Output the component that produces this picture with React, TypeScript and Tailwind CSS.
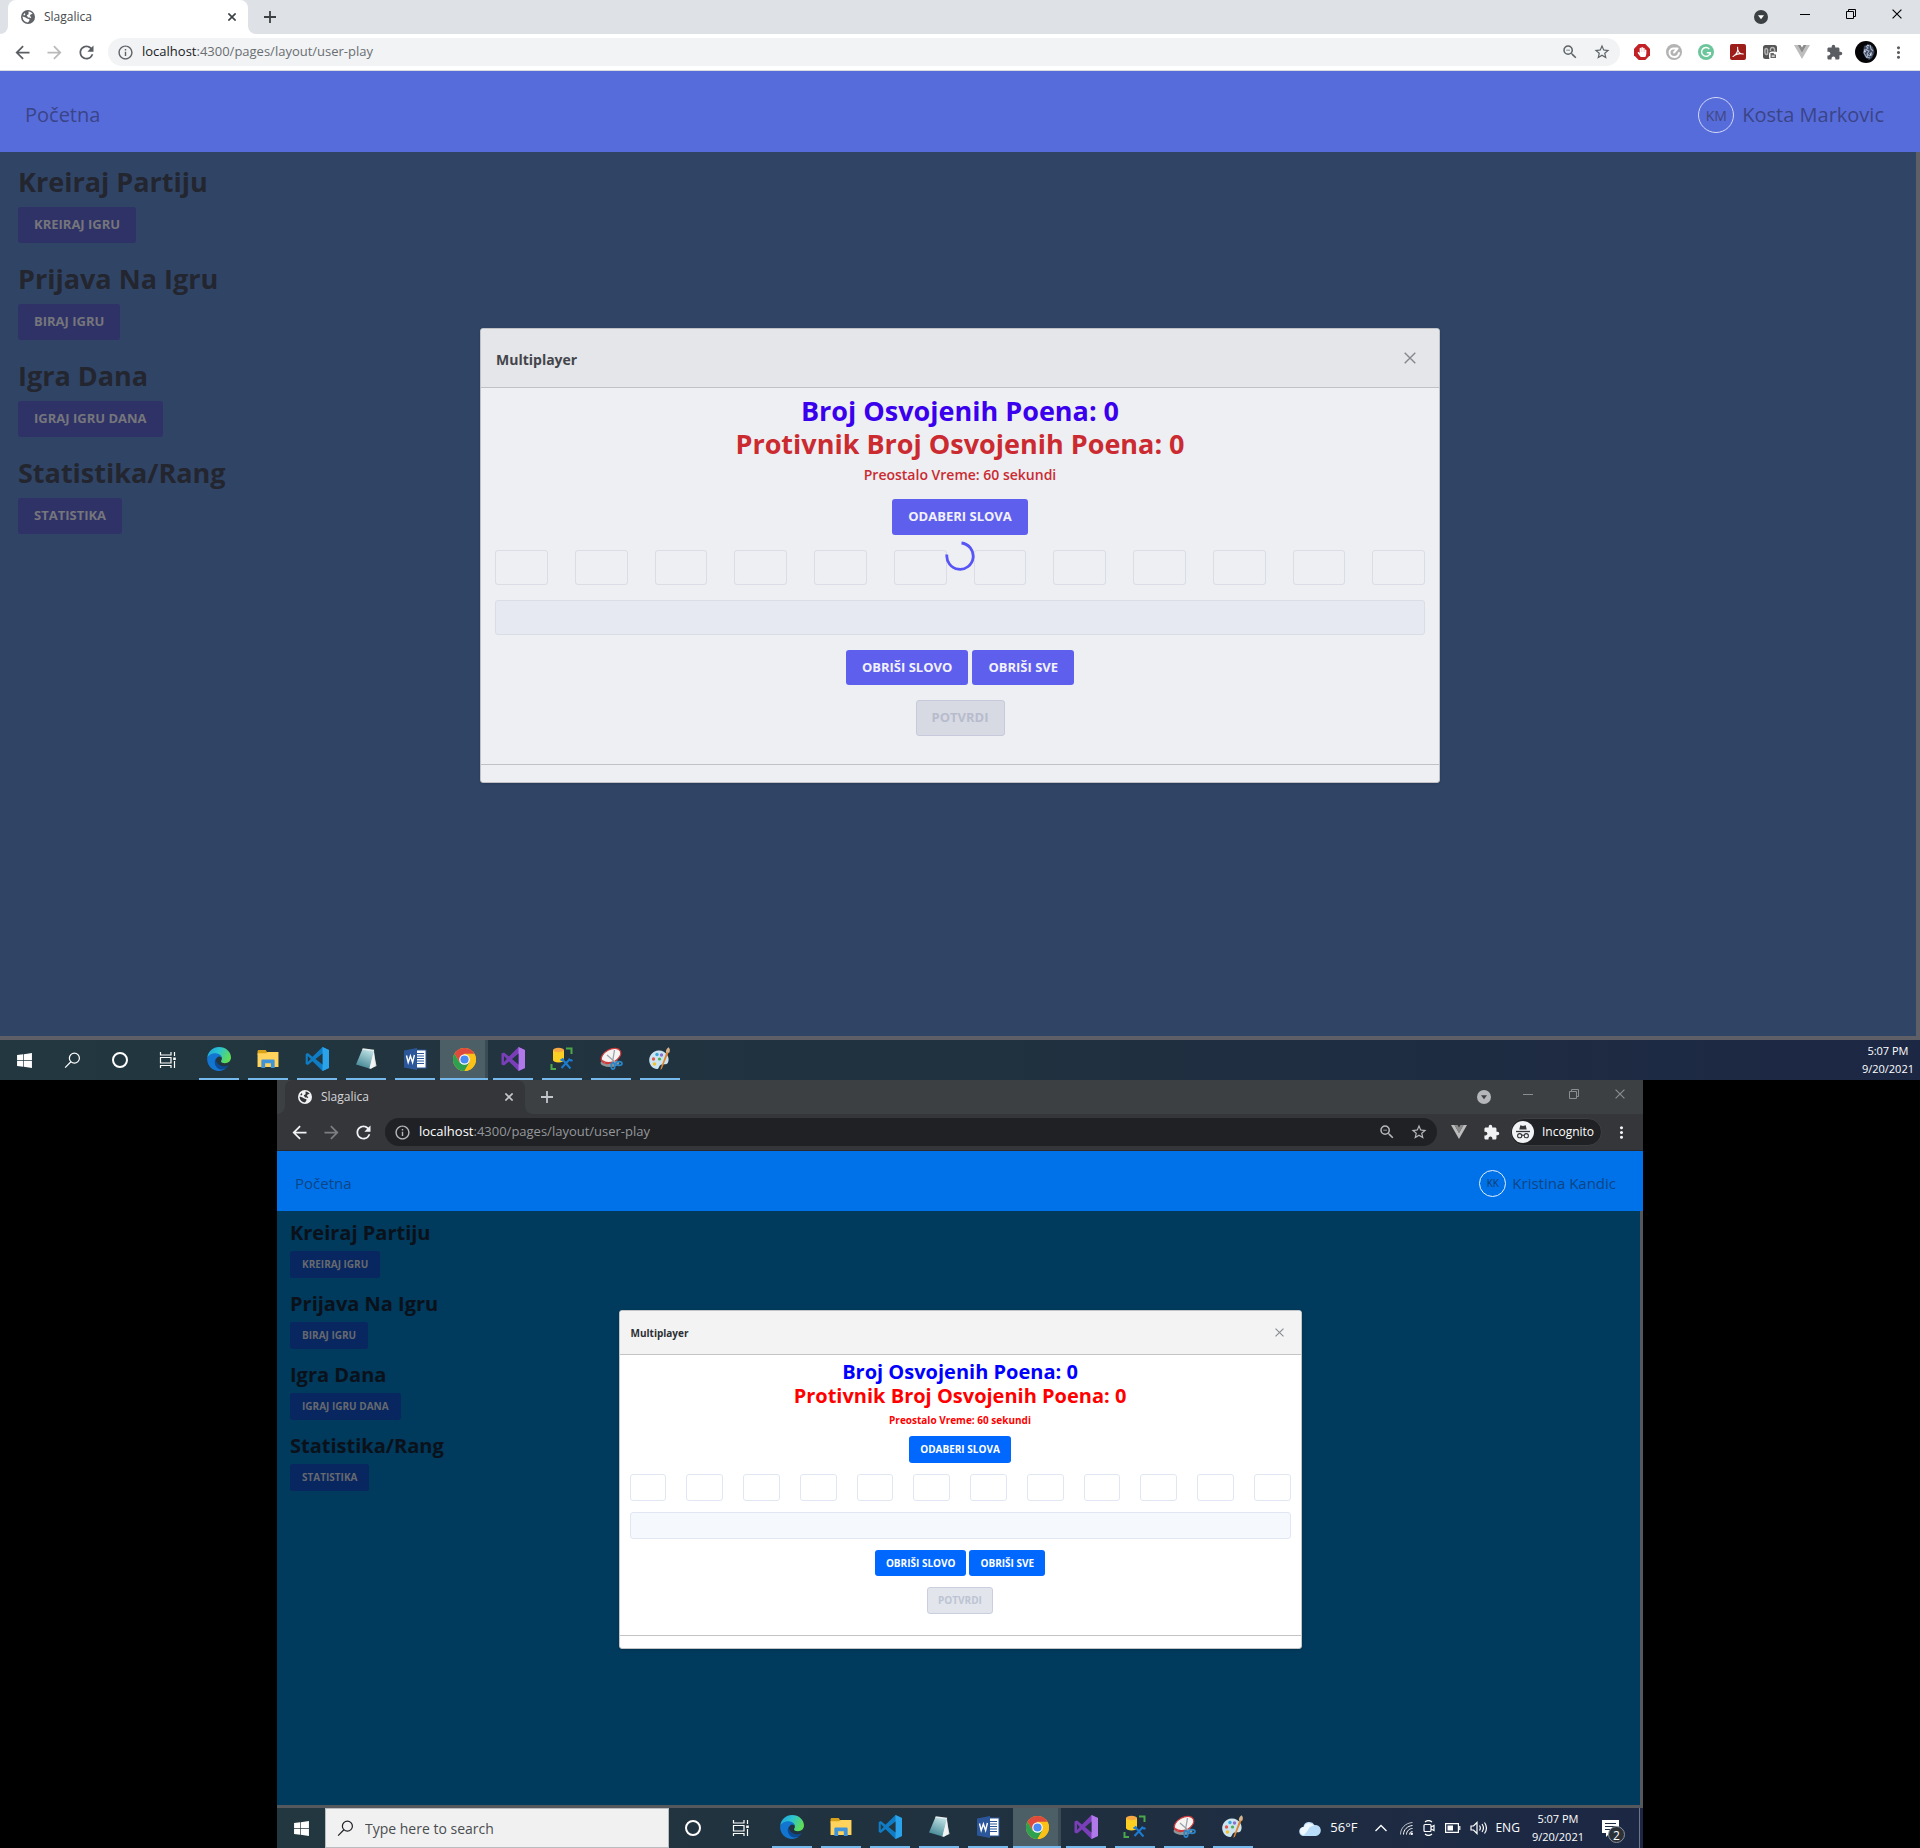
import { createContext, useContext, useId } from "react";
import type { ReactNode } from "react";
import { clsx } from "clsx";
import {
  MdArrowBack,
  MdArrowForward,
  MdExtension,
  MdInfoOutline,
  MdMoreVert,
  MdRefresh,
  MdStarBorder,
  MdZoomOut,
} from "react-icons/md";
import { FaHandPaper, FaWindows } from "react-icons/fa";

/* ---------- Themes ---------- */

const host = {
  strip: "bg-[#dee1e6]",
  toolbar: "bg-white border-[#dadce0]",
  tab: "bg-white",
  tabText: "text-[#45494d]",
  favicon: "text-[#5f6368]",
  tabClose: "text-[#3c4043]",
  tabMenu: "text-[#3c4043]",
  tabMenuMark: "#ffffff",
  winControl: "text-black",
  nav: "text-[#5a5e63]",
  navOff: "text-[#bababa]",
  omnibox: "bg-[#f1f3f4]",
  omniIcon: "text-[#5f6368]",
  urlHost: "text-[#202124]",
  urlPath: "text-[#6a6e73]",

  header: "h-[81px] pt-[7px] pr-9 pl-[25px] bg-[#576cdb] text-[#3a4487] text-[20px]",
  avatar: "size-9 text-[14px] text-[#41477c] border-[#d3d8f6]",
  userGap: "gap-2",
  body: "px-[18px] pt-[14px] border-r-4 border-b-4 border-[#5f6067] bg-[#304466]",
  section: "mb-5",
  sectionTitle: "mb-[9px] text-[27px] leading-[32px] text-[#23262f]",
  sideButton: "h-9 px-4 text-[13px] bg-[#2f3267] text-[#75767c]",

  dialog: "border-[#bfc1c5] bg-[#edeff3]",
  dialogHead: "h-[59px] pt-[2px] px-[15px] border-[#bfc1c5] bg-[#e4e6e9]",
  dialogTitle: "text-[14px] text-[#43454b]",
  dialogClose: "size-7 text-[#85878d]",
  cross: "size-3",
  dialogBody: "px-[14px] pt-[6px] pb-7",
  score: "text-[27px] leading-[33px]",
  own: "text-[#3a00ee]",
  rival: "text-[#cb2b30]",
  time: "mt-[3px] text-[14px] leading-6 font-semibold",
  rowGap: "mt-[15px]",
  pickGap: "mt-3",
  letters: "gap-[27px]",
  field: "h-[35px] border-[#dadce6] bg-[#edeff3]",
  word: "h-[35px] border-[#dadce6] bg-[#e6e9f2]",
  primary: "px-4 text-[13px] bg-[#5f5fee] text-[#f2f2fc]",
  pickHeight: "h-9",
  pairHeight: "h-[35px]",
  disabled: "h-9 px-[15px] text-[13px] border-[#c6cada] bg-[#d7dae3] text-[#b7bccd]",
  pairGap: "gap-1",
  dialogFoot: "h-[18px] border-[#bfc1c5]",
};

type Theme = typeof host;

const guest: Theme = {
  strip: "bg-[#3c4043]",
  toolbar: "bg-[#35363a] border-[#292a2d]",
  tab: "bg-[#35363a]",
  tabText: "text-[#d5d7da]",
  favicon: "text-[#f1f3f4]",
  tabClose: "text-[#c3c6ca]",
  tabMenu: "text-[#b4b6b9]",
  tabMenuMark: "#3c4043",
  winControl: "text-[#8b8e91]",
  nav: "text-[#f1f3f4]",
  navOff: "text-[#7d7e82]",
  omnibox: "bg-[#202124]",
  omniIcon: "text-[#b5b8bc]",
  urlHost: "text-white",
  urlPath: "text-[#94989c]",

  header: "h-[60px] pt-[5px] pr-[27px] pl-[18px] bg-[#0072e9] text-[#0c4586] text-[15px]",
  avatar: "size-[27px] text-[10px] text-[#123c6b] border-[#e6f1fd]",
  userGap: "gap-1.5",
  body: "px-[13px] pt-[10px] border-r-3 border-b-3 border-[#55585c] bg-[#003a5c]",
  section: "mb-[14px]",
  sectionTitle: "mb-1.5 text-[20px] leading-6 text-[#0b111a]",
  sideButton: "h-[27px] px-3 text-[10px] bg-[#08265f] text-[#666a70]",

  dialog: "border-[#c2c4c6] bg-white",
  dialogHead: "h-[44px] pt-px px-[11px] border-[#c2c4c6] bg-[#f3f3f3]",
  dialogTitle: "text-[10px] text-[#2b2f33]",
  dialogClose: "size-5 text-[#85898c]",
  cross: "size-[9px]",
  dialogBody: "px-[10px] pt-[5px] pb-[21px]",
  score: "text-[20px] leading-6",
  own: "text-[#0000ff]",
  rival: "text-[#ff0000]",
  time: "mt-1 text-[10px] leading-4 font-bold",
  rowGap: "mt-[11px]",
  pickGap: "mt-2",
  letters: "gap-5",
  field: "h-[27px] border-[#e1e7f2] bg-white",
  word: "h-[27px] border-[#e1e7f2] bg-[#f5f8fc]",
  primary: "px-[11px] text-[10px] bg-[#0068ff] text-white",
  pickHeight: "h-[27px]",
  pairHeight: "h-[26px]",
  disabled: "h-[27px] px-[10px] text-[10px] border-[#c9cfdd] bg-[#e2e5ec] text-[#bcc4d3]",
  pairGap: "gap-[3px]",
  dialogFoot: "h-[13px] border-[#c2c4c6]",
};

const ThemeContext = createContext<Theme>(host);

/* ---------- Small drawings ---------- */

const Cross = ({ className }: { className: string }) => (
  <svg viewBox="0 0 12 12" className={className} fill="none" stroke="currentColor">
    <path d="M.7.7l10.6 10.6M11.3.7L.7 11.3" strokeWidth="1.400" />
  </svg>
);

const Favicon = () => (
  <svg viewBox="0 0 14 14" className="size-[14px]">
    <circle cx="7" cy="7" r="7" fill="currentColor" />
    <path
      d="M7.500 1.600C9.300 1.700 10.800 2.700 11.700 4.100L9.900 4.300 8.700 5.900 10.300 7 9.600 8.300 8.800 7.600 7 7.600 6.600 6.500 5.700 5.900 6.100 4.900 7.600 4.200Z"
      fill="var(--cut)"
    />
    <path
      d="M1.700 6.500L4.500 7.400 6.100 8.500 8.500 9.300 8.300 10.800 6.900 12.400C4.200 12.300 1.900 10.200 1.600 7.500ZM3.600 3L4.500 4.300 3.300 5.400 2.200 5Z"
      fill="var(--cut)"
    />
  </svg>
);

const VueMark = () => (
  <svg viewBox="0 0 16 14" className="h-[14px] w-4">
    <path d="M0 0h3.500L8 8l4.500-8H16L8 14Z" fill="#bdbdbd" />
    <path d="M3.500 0h3L8 2.600 9.500 0h3L8 8Z" fill="#8b8b8b" />
  </svg>
);

const AdBlock = () => (
  <span className="relative grid size-4 place-items-center">
    <svg viewBox="0 0 16 16" className="absolute inset-0">
      <path d="M4.700 0h6.600L16 4.700v6.600L11.300 16H4.700L0 11.300V4.700Z" fill="#c22126" />
    </svg>
    <FaHandPaper className="relative size-[10px] text-white" />
  </span>
);

const Clipper = () => (
  <svg viewBox="0 0 16 16" className="size-4">
    <circle cx="8" cy="8" r="8" fill="#b3b3b3" />
    <path
      d="M13 9C12.500 11.500 10.500 13 8.300 13 5.300 13 3.300 10.800 3.500 8.200 3.700 6 5.500 4.300 7.800 4.500L11.500 4.500 8 8.500"
      fill="none"
      stroke="#fff"
      strokeWidth="2"
      strokeLinecap="round"
      strokeLinejoin="round"
    />
  </svg>
);

const Grammar = () => (
  <svg viewBox="0 0 16 16" className="size-4">
    <circle cx="8" cy="8" r="8" fill="#6cc69b" />
    <path d="M11.300 5A4.400 4.400 0 1 0 12.300 8.800H8.800M12.300 8.800V11" fill="none" stroke="#fff" strokeWidth="1.400" />
  </svg>
);

const Pdf = () => (
  <svg viewBox="0 0 16 16" className="size-4">
    <rect width="16" height="16" rx="2" fill="#9c1d1a" />
    <path
      d="M3 12.500C6 11 8.300 7.500 7.600 3.200M7.800 5.500C8.500 8.500 10.500 10.200 13.300 10M4.500 11.300C7 9.800 10 9.200 13 10"
      fill="none"
      stroke="#fff"
      strokeWidth="1.100"
      strokeLinecap="round"
    />
  </svg>
);

const Mask = () => (
  <svg viewBox="0 0 16 16" className="size-4">
    <rect x="1" y="1" width="14" height="14" rx="2.500" fill="#555" />
    <path
      d="M3.200 5c1.500-1 2.600-.2 2.400 2S6 11 4.300 10.500 2.600 8 3.200 5ZM8.500 7c-.5-2.500.5-3.500 2-3.500S13 5 12.500 7"
      fill="none"
      stroke="#b5b5b5"
      strokeWidth="1.500"
    />
    <rect x="7" y="7.500" width="9" height="8.500" rx="3" fill="#fff" />
    <path d="M8.500 9h3l1 1.500h1.500V14H8.500Z" fill="#666" />
    <path d="M9.700 11.500h3v1.200h-3Z" fill="#fff" />
  </svg>
);

const ProfilePhoto = () => (
  <svg viewBox="0 0 22 22" className="size-[22px]">
    <circle cx="11" cy="11" r="11" fill="#050507" />
    <path d="M9 5l5-2 4 3 1.500 5-2.500 6-3 2-4-3-2-5Z" fill="#3c4960" />
    <path
      d="M11 5l2 2-2 2 3 1-2 3 3 2M15 4l1 4 2 2M10 8l-1 4 3 5M13 13l-1 3 3 1M16 11l1 3"
      fill="none"
      stroke="#a3b1c6"
      strokeWidth="1.100"
    />
    <path d="M9 10l2 1M15 12l1 3M12 4l2 1" stroke="#e6ebf2" />
  </svg>
);

const IncognitoFace = () => (
  <svg viewBox="0 0 22 22" className="size-[22px]">
    <circle cx="11" cy="11" r="11" fill="#f1f3f4" />
    <path d="M7.300 8.500L8.300 4.300l2.700.7 2.700-.7 1 4.200Z" fill="#35363a" />
    <path d="M4 10.500h14" stroke="#35363a" strokeWidth="1.300" />
    <g fill="none" stroke="#35363a" strokeWidth="1.100">
      <circle cx="7.700" cy="14.700" r="2.100" />
      <circle cx="14.300" cy="14.700" r="2.100" />
      <path d="M9.800 14.500c.8-.6 1.600-.6 2.400 0" />
    </g>
  </svg>
);

const SearchGlass = ({ className }: { className: string }) => (
  <svg viewBox="0 0 18 18" className={className} fill="none" stroke="currentColor" strokeWidth="1.300">
    <circle cx="11" cy="6.500" r="5.300" />
    <path d="M7.300 10.300L1.200 16.500" />
  </svg>
);

const TaskView = () => (
  <svg viewBox="0 0 18 16" className="h-4 w-[18px]" fill="none" stroke="#fff" strokeWidth="1.200">
    <path d="M1.500 0v3h10.500V0M1.500 16v-2.500h10.500V16M1.500 5.500h10.500v5.500H1.500ZM15.500 0v4M15.500 9v7" />
    <path d="M14.200 5.500h2.600v2.500h-2.600Z" fill="#fff" stroke="none" />
  </svg>
);

const Edge = () => {
  const id = useId();
  return (
    <svg viewBox="0 0 24 24" className="size-6">
      <defs>
        <linearGradient id={id} x1="0" y1="0" x2="1" y2=".4">
          <stop offset="0" stopColor="#1f9fdc" />
          <stop offset=".5" stopColor="#2bc3d2" />
          <stop offset="1" stopColor="#5edc5a" />
        </linearGradient>
      </defs>
      <path
        d="M.3 10.500C1 4.500 6 0 12 0c7 0 12 5 12 10.500 0 3.500-2.800 5.700-6 5.700-2.500 0-4-1-4-2 0-.7.900-1 .9-2.700C14.900 9 12.300 7.500 9.500 7.500c-4 0-8 1.500-9.200 3Z"
        fill={`url(#${id})`}
      />
      <path
        d="M.2 11C1.300 8 5 6.200 8.800 6.300 12 6.400 14.800 8.700 14.900 11.500 14.500 10 12.800 9.200 11.200 9.800 8.500 11 8 14 9.500 17.300c1.700 3.500 5.500 5.200 9.500 4C17 23 14.500 24 12 24 5 24-.5 18 .2 11Z"
        fill="#1276d0"
      />
      <path
        d="M8.800 11.500C7 14 7.500 18.500 10.500 21c3 2.500 7.500 2 10-1.200 1.300-1.500 1.800-2 .9-1.500-3 1.700-7.500 1.200-10-1-1.800-1.700-2.900-3.500-2.600-5.800Z"
        fill="#0c4a94"
      />
    </svg>
  );
};

const Explorer = () => (
  <svg viewBox="0 0 22 20" className="h-[19px] w-[22px]">
    <path d="M0 1.500C0 .7.500 0 1.300 0h7.200L10 2v3H0Z" fill="#d9a21b" />
    <path d="M0 3.500h9L10.500 2H22v16H0Z" fill="#ffd35c" />
    <path d="M4 19v-7.500C4 10.500 4.500 10 5.500 10h11c1 0 1.500.5 1.500 1.500V19h-4v-5H8v5Z" fill="#3f93d8" />
  </svg>
);

const Code = () => (
  <svg viewBox="0 0 24 24" className="size-6">
    <path d="M17.500 0L24 3v18l-6.500 3L7.500 14.300 2.800 18 .7 17V7l2.100-1 4.700 3.700Z" fill="#0f7cc4" />
    <path d="M17.500 0L24 3v18l-6.500 3Z" fill="#2ba3ea" />
    <path d="M17.500 6.500v11L10.500 12ZM2.800 9v6L5.800 12Z" fill="#22373f" />
  </svg>
);

const Notepad = () => {
  const id = useId();
  return (
    <svg viewBox="0 0 24 24" className="size-6">
      <defs>
        <linearGradient id={id} x1=".7" y1="0" x2=".3" y2="1">
          <stop offset="0" stopColor="#c3e3e7" />
          <stop offset="1" stopColor="#3f8592" />
        </linearGradient>
      </defs>
      <path d="M19.500 3.500L22.500 19 17 21.500 14 21Z" fill="#d9dfdf" />
      <path d="M8.500 2l11.500 1.500L15.500 21.500 2 17.500Z" fill={`url(#${id})`} />
      <path d="M20 3.500L15.500 21.500l1.500.3 4-3Z" fill="#f3f5f5" />
      <path d="M8.700 1.300l11.500 1.400-.3 1.500L8.300 2.800Z" fill="#e8eeee" />
    </svg>
  );
};

const Word = () => (
  <svg viewBox="0 0 24 24" className="size-6">
    <rect x="11" y="3" width="12" height="18" fill="#fff" stroke="#2b579a" />
    <path d="M14 6.500h7M14 9h7M14 11.500h7M14 14h7M14 16.500h7" stroke="#2b579a" strokeWidth="1.200" />
    <path d="M1 3.500L14 1v22L1 20.500Z" fill="#2b579a" />
    <path d="M3.500 8.500l1.700 7 2.200-6.500 2.200 6.500 1.800-7.500" fill="none" stroke="#fff" strokeWidth="1.400" />
  </svg>
);

const Chrome = () => (
  <svg viewBox="0 0 24 24" className="size-[23px]">
    <circle cx="12" cy="12" r="12" fill="#fbc116" />
    <path d="M12 6h10.400A12 12 0 0 0 1.600 6l5.200 9Z" fill="#de4a3c" />
    <path d="M1.600 6A12 12 0 0 0 12 24l5.200-9H6.800Z" fill="#2da14f" />
    <path d="M12 6.500h10.600A12 12 0 0 1 12 24l5-9Z" fill="#fbc116" />
    <circle cx="12" cy="12" r="5.500" fill="#fff" />
    <circle cx="12" cy="12" r="4.300" fill="#4a8af4" />
  </svg>
);

const VisualStudio = () => (
  <svg viewBox="0 0 24 24" className="size-6">
    <path d="M17.500 0L24 3v18l-6.500 3L8 14.500 3 18.500.5 17.500v-11L3 5.500l5 4Z" fill="#7a3fb8" />
    <path d="M17.500 0L24 3v18l-6.500 3Z" fill="#b078e8" />
    <path d="M17.500 6.500v11L11 12ZM3 9v6L5.800 12Z" fill="#203340" />
  </svg>
);

const Database = () => (
  <svg viewBox="0 0 24 24" className="size-6">
    <path d="M3 3v10c0 1.600 2.500 2.500 5.500 2.500S14 14.600 14 13V3Z" fill="#fbd022" />
    <ellipse cx="8.500" cy="3" rx="5.500" ry="2.200" fill="#f6a843" />
    <path d="M16 1.500h5.500V7M6 22H1.500v-5" fill="none" stroke="#4aa84a" strokeWidth="2" />
    <path
      d="M12 12l8.500 9.500M19.500 12.500l-8 8.500M10.500 13.500l3-2M19 11.500c.5 2 2 2.300 3.500 1.500"
      fill="none"
      stroke="#1d7bd0"
      strokeWidth="2"
    />
  </svg>
);

const Snip = () => (
  <svg viewBox="0 0 24 24" className="size-6">
    <ellipse cx="11" cy="16" rx="9.500" ry="4" fill="#8f9698" />
    <ellipse cx="12" cy="9" rx="10.500" ry="6.500" transform="rotate(-28 12 9)" fill="#f6f3f3" stroke="#cf3b3b" strokeWidth="1.200" />
    <path d="M3 13.500c4 3 9 2.500 12 .5" fill="none" stroke="#cf3b3b" strokeWidth="1.500" />
    <path d="M15.500 3l-2 12M8 8l9 8" stroke="#9aa4a8" strokeWidth="1.300" />
    <g fill="none" stroke="#2a86c8" strokeWidth="1.700">
      <ellipse cx="14" cy="19" rx="1.800" ry="3.200" />
      <ellipse cx="20" cy="16.500" rx="3" ry="1.900" />
    </g>
  </svg>
);

const Paint = () => (
  <svg viewBox="0 0 24 24" className="size-6">
    <path
      d="M10.500 3.500C5 4 1 8.500 1.200 13.500 1.500 18 4.800 22 9 22c2.200 0 1.500-2.600 3.500-4 2.500-1.500 6 .5 7.500-2.500C22.500 10 17.500 3 10.500 3.500Z"
      fill="#cbe4f0"
    />
    <circle cx="9" cy="7.500" r="1.700" fill="#3aa6dc" />
    <circle cx="13.500" cy="8" r="1.700" fill="#8d6fd0" />
    <circle cx="5.500" cy="12" r="1.700" fill="#e2574c" />
    <circle cx="6.500" cy="17" r="1.700" fill="#f2c02e" />
    <circle cx="11.500" cy="12" r="1.600" fill="#4cae4f" />
    <path d="M20.800 5L14 21.500l-1.500 1.500.3-2.200L18.500 5Z" fill="#e0842d" />
    <path d="M18 5.500c-.5-2 .7-4.500 2.700-5.300 1.500 2 1.500 3.500.5 5.500Z" fill="#d9b48a" />
  </svg>
);

const Cloud = () => (
  <svg viewBox="0 0 22 16" className="h-4 w-[22px]">
    <path d="M5 16a4.500 4.500 0 0 1-.6-9A6 6 0 0 1 15.500 5a5.500 5.500 0 0 1 1.500 11Z" fill="#b8ddf8" />
    <path d="M5 15a4 4 0 0 1 0-8A5.500 5.500 0 0 1 15 6c-4 0-5 2-6 4s-2.500 3-4 5Z" fill="#eef8ff" />
  </svg>
);

/* ---------- Browser window ---------- */

function ToolButton({ label, className, children }: { label: string; className?: string; children: ReactNode }) {
  return (
    <button type="button" aria-label={label} className={clsx("grid h-7 w-8 place-items-center", className)}>
      {children}
    </button>
  );
}

function TabStrip() {
  const t = useContext(ThemeContext);
  const light = t === host;
  return (
    <div className={clsx("flex h-[34px] items-end", t.strip)}>
      <span className={clsx("size-2", t.tab)}>
        <span className={clsx("block size-2 rounded-br-lg", t.strip)} />
      </span>
      <div className={clsx("flex h-[34px] w-60 items-center rounded-t-lg pr-2 pl-[13px]", t.tab)}>
        <span className={clsx(t.favicon, light ? "[--cut:white]" : "[--cut:#35363a]")}>
          <Favicon />
        </span>
        <span className={clsx("ml-[9px] grow text-[12px]", t.tabText)}>Slagalica</span>
        <button type="button" aria-label="Close tab" className={clsx("grid size-4 place-items-center", t.tabClose)}>
          <svg viewBox="0 0 8 8" className="size-2" stroke="currentColor" strokeWidth="1.600">
            <path d="M.4.4l7.200 7.200M7.600.4L.4 7.600" />
          </svg>
        </button>
      </div>
      <span className={clsx("size-2", t.tab)}>
        <span className={clsx("block size-2 rounded-bl-lg", t.strip)} />
      </span>
      <button type="button" aria-label="New tab" className={clsx("grid h-[34px] w-7 place-items-center", t.tabClose)}>
        <svg viewBox="0 0 12 12" className="size-3" stroke="currentColor" strokeWidth="1.800">
          <path d="M6 0v12M0 6h12" />
        </svg>
      </button>
      <div className="ml-auto flex h-[34px] items-start">
        <button type="button" aria-label="Search tabs" className={clsx("mr-[7px] grid h-[34px] w-7 place-items-center", t.tabMenu)}>
          <svg viewBox="0 0 14 14" className="size-[14px]">
            <circle cx="7" cy="7" r="7" fill="currentColor" />
            <path d="M4 5.300h6L7 9.300Z" fill={t.tabMenuMark} />
          </svg>
        </button>
        <button type="button" aria-label="Minimize" className={clsx("grid h-7 w-[46px] place-items-center", t.winControl)}>
          <span className="h-px w-[10px] bg-current" />
        </button>
        <button type="button" aria-label="Restore" className={clsx("grid h-7 w-[46px] place-items-center", t.winControl)}>
          <svg viewBox="0 0 10 10" className="size-[10px]" fill="none" stroke="currentColor">
            <path d="M.5 2.500h7v7h-7ZM2.500 2.500v-2h7v7h-2" />
          </svg>
        </button>
        <button type="button" aria-label="Close" className={clsx("grid h-7 w-[46px] place-items-center", t.winControl)}>
          <Cross className="size-[10px]" />
        </button>
      </div>
    </div>
  );
}

function Toolbar() {
  const t = useContext(ThemeContext);
  const light = t === host;
  return (
    <div className={clsx("flex h-[37px] items-center border-b px-1.5", t.toolbar)}>
      <ToolButton label="Back" className={t.nav}>
        <MdArrowBack className="size-[21px]" />
      </ToolButton>
      <ToolButton label="Forward" className={t.navOff}>
        <MdArrowForward className="size-[21px]" />
      </ToolButton>
      <ToolButton label="Reload" className={t.nav}>
        <MdRefresh className="size-[21px]" />
      </ToolButton>
      <div className={clsx("ml-1.5 flex h-7 min-w-0 grow items-center rounded-full pl-[9px]", t.omnibox)}>
        <MdInfoOutline className={clsx("size-[17px] shrink-0", t.omniIcon)} />
        <a href="#play" className={clsx("ml-2 grow text-[13px]", t.urlPath)}>
          <span className={t.urlHost}>localhost</span>:4300/pages/layout/user-play
        </a>
        <ToolButton label="Zoom" className={t.omniIcon}>
          <MdZoomOut className="size-[18px]" />
        </ToolButton>
        <ToolButton label="Bookmark" className={clsx("mr-0.5", t.omniIcon)}>
          <MdStarBorder className="size-[18px]" />
        </ToolButton>
      </div>
      <div className="ml-1.5 flex items-center">
        {light && (
          <>
            <ToolButton label="Ad blocker"><AdBlock /></ToolButton>
            <ToolButton label="Clipper"><Clipper /></ToolButton>
            <ToolButton label="Grammar"><Grammar /></ToolButton>
            <ToolButton label="PDF"><Pdf /></ToolButton>
            <ToolButton label="Mask"><Mask /></ToolButton>
          </>
        )}
        <ToolButton label="Vue"><VueMark /></ToolButton>
        <ToolButton label="Extensions" className={t.nav}>
          <MdExtension className="size-[17px]" />
        </ToolButton>
        {light ? (
          <ToolButton label="Profile"><ProfilePhoto /></ToolButton>
        ) : (
          <button
            type="button"
            className="mx-[3px] flex h-7 w-[92px] items-center rounded-full border border-[#3e3f43] bg-[#202124] pl-px text-[12px] text-white"
          >
            <IncognitoFace />
            <span className="ml-2">Incognito</span>
          </button>
        )}
        <ToolButton label="Menu" className={t.nav}>
          <MdMoreVert className="size-[19px]" />
        </ToolButton>
      </div>
    </div>
  );
}

/* ---------- Application ---------- */

const sections = [
  ["Kreiraj Partiju", "KREIRAJ IGRU"],
  ["Prijava Na Igru", "BIRAJ IGRU"],
  ["Igra Dana", "IGRAJ IGRU DANA"],
  ["Statistika/Rang", "STATISTIKA"],
];

function GameDialog({ loading }: { loading: boolean }) {
  const t = useContext(ThemeContext);
  const button = "rounded-[3px] font-bold whitespace-nowrap";
  return (
    <div role="dialog" aria-label="Multiplayer" className={clsx("relative w-1/2 rounded-[3px] border shadow-sm", t.dialog)}>
      <div className={clsx("flex items-center justify-between rounded-t-[2px] border-b", t.dialogHead)}>
        <h2 className={clsx("font-bold", t.dialogTitle)}>Multiplayer</h2>
        <button type="button" aria-label="Close dialog" className={clsx("mb-0.5 grid place-items-center", t.dialogClose)}>
          <Cross className={t.cross} />
        </button>
      </div>
      <div className={clsx("flex flex-col items-center", t.dialogBody)}>
        <p className={clsx("font-bold", t.score, t.own)}>Broj Osvojenih Poena: 0</p>
        <p className={clsx("font-bold", t.score, t.rival)}>Protivnik Broj Osvojenih Poena: 0</p>
        <p className={clsx(t.time, t.rival)}>Preostalo Vreme: 60 sekundi</p>
        <button type="button" className={clsx(button, t.primary, t.pickHeight, t.pickGap)}>ODABERI SLOVA</button>
        <div className={clsx("grid w-full grid-cols-12", t.letters, t.rowGap)}>
          {Array.from({ length: 12 }, (_, i) => (
            <input key={i} aria-label={`Slovo ${i + 1}`} readOnly className={clsx("w-full min-w-0 rounded-[3px] border", t.field)} />
          ))}
        </div>
        <input aria-label="Reč" readOnly className={clsx("w-full rounded-[3px] border", t.word, t.rowGap)} />
        <div className={clsx("flex", t.pairGap, t.rowGap)}>
          <button type="button" className={clsx(button, t.primary, t.pairHeight)}>OBRIŠI SLOVO</button>
          <button type="button" className={clsx(button, t.primary, t.pairHeight)}>OBRIŠI SVE</button>
        </div>
        <button type="button" disabled className={clsx(button, "border", t.disabled, t.rowGap)}>POTVRDI</button>
      </div>
      <div className={clsx("border-t", t.dialogFoot)} />
      {loading && (
        <div className="absolute inset-0 grid place-items-center">
          <svg viewBox="0 0 30 30" className="size-[30px]" fill="none" stroke="#5855f6" strokeWidth="2.800">
            <path d="M16.500 2A13.200 13.200 0 1 1 1.900 13.500" />
          </svg>
        </div>
      )}
    </div>
  );
}

function GamePage({ user, initials, loading }: { user: string; initials: string; loading: boolean }) {
  const t = useContext(ThemeContext);
  return (
    <div className="relative flex grow flex-col">
      <header className={clsx("flex items-center justify-between", t.header)}>
        <a href="#home">Početna</a>
        <div className={clsx("flex items-center", t.userGap)}>
          <span className={clsx("grid place-items-center rounded-full border", t.avatar)}>{initials}</span>
          <span>{user}</span>
        </div>
      </header>
      <main className={clsx("grow", t.body)}>
        {sections.map(([title, action]) => (
          <section key={title} className={t.section}>
            <h1 className={clsx("font-bold", t.sectionTitle)}>{title}</h1>
            <button type="button" className={clsx("block rounded-[3px] font-bold", t.sideButton)}>{action}</button>
          </section>
        ))}
      </main>
      <div className="absolute inset-0 flex items-center justify-center">
        <GameDialog loading={loading} />
      </div>
    </div>
  );
}

/* ---------- Taskbar ---------- */

const apps: { name: string; icon: ReactNode }[] = [
  { name: "Edge", icon: <Edge /> },
  { name: "File Explorer", icon: <Explorer /> },
  { name: "Visual Studio Code", icon: <Code /> },
  { name: "Notepad", icon: <Notepad /> },
  { name: "Word", icon: <Word /> },
  { name: "Chrome", icon: <Chrome /> },
  { name: "Visual Studio", icon: <VisualStudio /> },
  { name: "Database", icon: <Database /> },
  { name: "Snipping Tool", icon: <Snip /> },
  { name: "Paint", icon: <Paint /> },
];

function TaskApps() {
  return (
    <div className="ml-[3px] flex h-10 gap-px">
      {apps.map(({ name, icon }) => {
        const active = name === "Chrome";
        return (
          <button
            key={name}
            type="button"
            aria-label={name}
            className={clsx("flex w-12 flex-col items-center", active && "bg-[#4c5f67] shadow-[inset_-3px_0_#3b4c55]")}
          >
            <span className="grid grow place-items-center">{icon}</span>
            <span className={clsx("h-0.5 bg-[#76b9ed]", active ? "w-full" : "w-10")} />
          </button>
        );
      })}
    </div>
  );
}

function SystemButton({ label, children }: { label: string; children: ReactNode }) {
  return (
    <button type="button" aria-label={label} className="grid h-10 w-12 shrink-0 place-items-center text-white">
      {children}
    </button>
  );
}

const Ring = () => <span className="size-4 rounded-full border-2 border-white" />;

const Clock = () => (
  <div className="text-center text-[11px] leading-[18px] text-white">
    <div>5:07 PM</div>
    <div>9/20/2021</div>
  </div>
);

function Tray() {
  return (
    <div className="ml-auto flex items-center text-white">
      <Cloud />
      <span className="ml-[9px] text-[13px]">56°F</span>
      <div className="ml-[18px] flex items-center gap-[9px]">
        <svg viewBox="0 0 12 12" className="mr-[3px] size-3" fill="none" stroke="currentColor" strokeWidth="1.300">
          <path d="M.5 9L6 3.500 11.500 9" />
        </svg>
        <svg viewBox="0 0 14 14" className="size-[14px]" fill="none" stroke="currentColor">
          <path d="M1.500 13.500C1.500 7 6.500 2 13.500 1.500" opacity=".7" />
          <path d="M4.500 13.500C4.500 8.500 8.500 5 13.500 4.500M7.500 13.500c0-3.500 3-6 6-6M10.500 13.500c0-1.800 1.300-3 3-3" />
          <circle cx="12.700" cy="12.700" r="1.300" fill="currentColor" stroke="none" />
        </svg>
        <svg viewBox="0 0 14 16" className="h-4 w-[14px]" fill="none" stroke="currentColor" strokeWidth="1.200">
          <rect x="2" y="4.500" width="7" height="7" rx="1" />
          <path d="M9 7l3-1.500v5L9 9M3 2c2-1.700 5-1.700 7 0M3 14c2 1.700 5 1.700 7 0" />
        </svg>
        <svg viewBox="0 0 16 10" className="h-[10px] w-4" fill="none" stroke="currentColor" strokeWidth="1.200">
          <path d="M.6.6h12.800v8.800H.6ZM14.800 3v4" />
          <path d="M2.500 2.500H8v5H2.500Z" fill="currentColor" stroke="none" />
        </svg>
        <svg viewBox="0 0 18 14" className="h-[14px] w-[18px]" fill="none" stroke="currentColor" strokeWidth="1.200">
          <path d="M1 5h2.500L7 1.500v11L3.500 9H1ZM9.500 4.500c1 1.500 1 3.500 0 5M12 3c1.800 2.500 1.800 5.500 0 8M14.500 1.500c2.500 3.500 2.500 7.500 0 11" />
        </svg>
      </div>
      <span className="ml-[7px] text-[12px]">ENG</span>
      <div className="ml-3">
        <Clock />
      </div>
      <div className="relative mr-5 ml-[18px]">
        <svg viewBox="0 0 17 17" className="size-[17px]">
          <path d="M0 0h17v13H8l-4 4v-4H0Z" fill="#fff" />
          <path d="M3 3.500h11M3 6.500h11M3 9.500h11" stroke="#1e2c42" strokeWidth="1.200" />
        </svg>
        <span className="absolute top-1.5 left-1.5 grid size-[17px] place-items-center rounded-full border border-[#8b929c] bg-[#2c3138] text-[12px]">
          2
        </span>
      </div>
      <span className="h-10 w-1 border-l border-[#6e7686]" />
    </div>
  );
}

function Taskbar({ withSearch }: { withSearch: boolean }) {
  return (
    <footer className="flex h-10 items-center bg-linear-to-r from-[#22373f] via-[#20313f] to-[#1c2744]">
      <SystemButton label="Start">
        <FaWindows className="size-[17px]" />
      </SystemButton>
      {withSearch ? (
        <label className="flex h-10 w-[344px] items-center border border-[#b9bdbf] bg-[#f1f1f1] pl-[11px] text-[#1e2226]">
          <SearchGlass className="size-[17px]" />
          <input
            aria-label="Search"
            placeholder="Type here to search"
            className="ml-[11px] grow bg-transparent text-[14px] outline-none placeholder:text-[#4a4d50]"
          />
        </label>
      ) : (
        <SystemButton label="Search">
          <SearchGlass className="size-[17px]" />
        </SystemButton>
      )}
      <SystemButton label="Cortana">
        <Ring />
      </SystemButton>
      <SystemButton label="Task View">
        <TaskView />
      </SystemButton>
      <TaskApps />
      {withSearch ? (
        <Tray />
      ) : (
        <div className="mr-1.5 ml-auto">
          <Clock />
        </div>
      )}
    </footer>
  );
}

export default function App() {
  return (
    <div className="flex min-h-screen flex-col bg-black font-['Open_Sans',sans-serif]">
      <ThemeContext.Provider value={host}>
        <div className="flex grow-[1080] basis-0 flex-col">
          <TabStrip />
          <Toolbar />
          <GamePage user="Kosta Markovic" initials="KM" loading />
          <Taskbar withSearch={false} />
        </div>
      </ThemeContext.Provider>
      <ThemeContext.Provider value={guest}>
        <div className="mx-auto flex w-full max-w-[1366px] grow-[768] basis-0 flex-col">
          <TabStrip />
          <Toolbar />
          <GamePage user="Kristina Kandic" initials="KK" loading={false} />
          <Taskbar withSearch />
        </div>
      </ThemeContext.Provider>
    </div>
  );
}
